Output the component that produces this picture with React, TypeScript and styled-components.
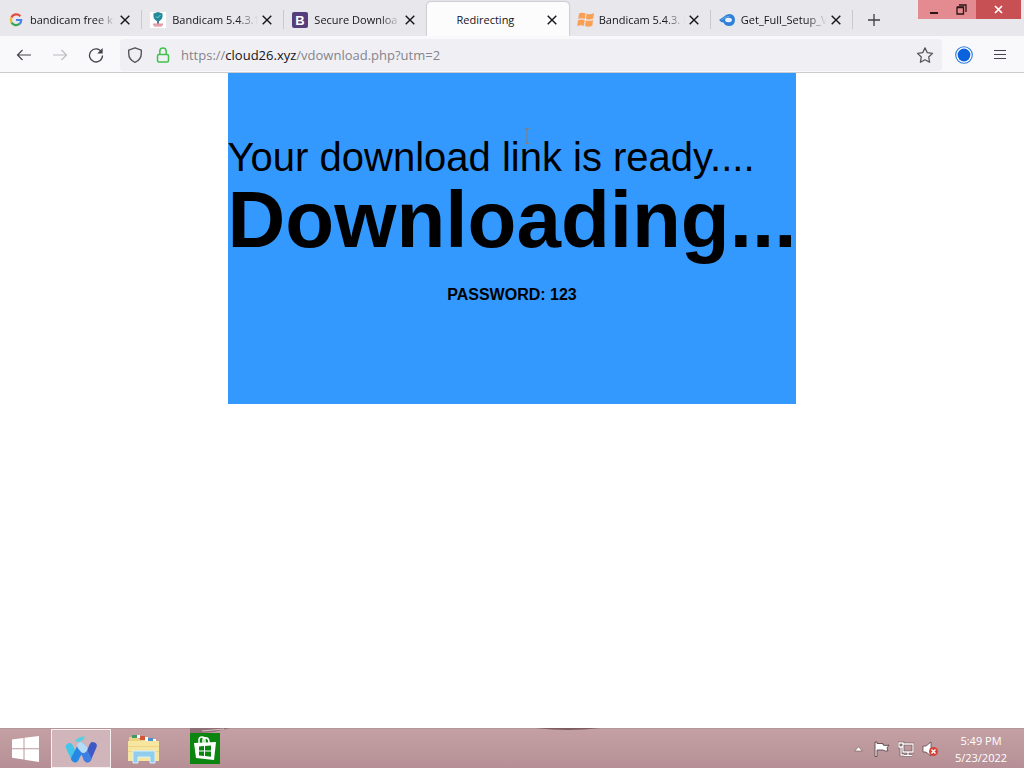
import React from "react";
import styled, { createGlobalStyle } from "styled-components";

const GlobalStyle = createGlobalStyle`
  *, *::before, *::after { box-sizing: border-box; }
  body { margin: 0; background: #fff; }
  button { border: 0; padding: 0; margin: 0; background: none; color: inherit; font: inherit; }
  svg { display: block; flex: none; }
`;

const Screen = styled.div`
  min-height: 100vh;
  display: flex;
  flex-direction: column;
  font-family: "Open Sans", "Noto Sans", sans-serif;
`;

const TabBar = styled.header`
  display: flex;
  height: 36px;
  background: #e8e7ec;
`;

const TabList = styled.nav`
  display: flex;
  flex: 0 1 853px;
  min-width: 0;
`;

const TabItem = styled.div<{ $active?: boolean; $divided?: boolean }>`
  position: relative;
  display: flex;
  align-items: center;
  flex: 1 1 0;
  min-width: 0;
  margin-top: ${(p) => (p.$active ? "2px" : "0")};
  padding: ${(p) => (p.$active ? "2px 8px 0" : "4px 8px 0")};
  border-radius: 4px 4px 0 0;
  background: ${(p) => (p.$active ? "#fcfcfd" : "transparent")};
  box-shadow: ${(p) => (p.$active ? "0 0 2px #8f8f9a" : "none")};
  clip-path: ${(p) => (p.$active ? "inset(-2px -2px 0 -2px)" : "none")};

  &::after {
    content: "";
    display: ${(p) => (p.$divided ? "block" : "none")};
    position: absolute;
    right: 0;
    top: 10px;
    width: 1px;
    height: 19px;
    background: #c9c8ce;
  }
`;

const TabLink = styled.a`
  display: flex;
  align-items: center;
  gap: 6px;
  flex: 1;
  min-width: 0;
  color: #15141a;
  text-decoration: none;
`;

const TabIcon = styled.span`
  width: 16px;
  height: 16px;
  flex: none;
`;

const TabTitle = styled.span<{ $fade?: boolean }>`
  flex: 1;
  min-width: 0;
  overflow: hidden;
  white-space: nowrap;
  font-size: 11px;
  line-height: 18px;
  mask-image: ${(p) => (p.$fade ? "linear-gradient(to right, #000 76%, transparent)" : "none")};
`;

const TabClose = styled.button`
  width: 18px;
  height: 18px;
  display: grid;
  place-items: center;
  color: #15141a;
`;

const NewTab = styled.button`
  width: 36px;
  height: 36px;
  display: grid;
  place-items: center;
  margin-left: 3px;
  padding-top: 4px;
  color: #3f3e46;
`;

const WindowControls = styled.div`
  display: flex;
  height: 19px;
  margin-left: auto;
  margin-right: 3px;
`;

const WindowButton = styled.button<{ $close?: boolean }>`
  width: ${(p) => (p.$close ? "45px" : "29px")};
  display: grid;
  place-items: center;
  background: ${(p) => (p.$close ? "#c75054" : "#e38b90")};
`;

const Toolbar = styled.div`
  display: flex;
  align-items: center;
  height: 37px;
  padding: 1px 6px 0;
  background: #f9f9fb;
  border-bottom: 1px solid #cccccf;
`;

const ToolButton = styled.button<{ $faded?: boolean }>`
  width: 36px;
  height: 32px;
  display: grid;
  place-items: center;
  color: ${(p) => (p.$faded ? "#bcbcc2" : "#45444c")};
`;

const AddressBar = styled.div`
  flex: 1;
  min-width: 0;
  display: flex;
  align-items: center;
  height: 32px;
  margin: 0 4px 0 6px;
  padding: 0 8px 0 7px;
  border-radius: 4px;
  background: #f0f0f4;
  color: #55545c;
`;

const AddressText = styled.a`
  flex: 1;
  min-width: 0;
  margin-left: 10px;
  overflow: hidden;
  white-space: nowrap;
  color: #85848c;
  font-size: 13px;
  line-height: 20px;
  text-decoration: none;

  b { color: #15141a; font-weight: 400; }
`;

const AddressIcons = styled.span`
  display: flex;
  gap: 12px;
`;

const Page = styled.main`
  flex: 1;
  display: flex;
  justify-content: center;
  align-items: flex-start;
  font-family: "Liberation Sans", Arial, sans-serif;
  color: #000;
`;

const Notice = styled.section`
  position: relative;
  padding: 64px 0 100px;
  background: #3399ff;
`;

const Ready = styled.p`
  margin: 0;
  font-size: 40px;
  line-height: 40px;
`;

const Downloading = styled.h1`
  margin: 0;
  font-size: 80px;
  line-height: 85px;
  font-weight: 700;
`;

const Password = styled.p`
  margin: 24px 0 0;
  font-size: 16px;
  line-height: 18px;
  font-weight: 700;
  text-align: center;
`;

const Pointer = styled.svg`
  position: absolute;
  left: 296px;
  top: 55px;
`;

const Taskbar = styled.footer`
  position: relative;
  display: flex;
  height: 40px;
  background: linear-gradient(#c4a0a4, #bb979c 60%, #b58f95);
  border-top: 1px solid #b3969a;
`;

const Reflection = styled.svg<{ $left: number }>`
  position: absolute;
  left: ${(p) => p.$left}px;
  top: -1px;
`;

const TaskButton = styled.button<{ $running?: boolean; $width: number }>`
  position: relative;
  width: ${(p) => p.$width}px;
  display: grid;
  place-items: center;
  border: ${(p) => (p.$running ? "1px solid #f6eff0" : "0")};
  background: ${(p) => (p.$running ? "#d0b6ba" : "transparent")};
`;

const Tray = styled.div`
  display: flex;
  align-items: center;
  margin-left: auto;
`;

const TrayButton = styled.button`
  width: 24px;
  height: 24px;
  display: grid;
  place-items: center;
`;

const Clock = styled.time`
  width: 82px;
  padding-right: 4px;
  color: #fff;
  font-size: 11px;
  line-height: 17px;
  text-align: center;
`;

const CloseGlyph = () => (
  <svg width="10" height="10" viewBox="0 0 10 10" stroke="currentColor" strokeWidth="1.4" fill="none">
    <path d="M.7.7l8.6 8.6M9.3.7L.7 9.3" />
  </svg>
);

const GoogleIcon = () => (
  <svg width="16" height="16" viewBox="0 0 16 16" fill="none" strokeWidth="2.2">
    <path d="M12.300 4.200A5.200 5.200 0 0 0 3.500 5.500" stroke="#e54b40" />
    <path d="M3.500 5.500a5.200 5.200 0 0 0 0 5" stroke="#f3b927" />
    <path d="M3.500 10.500a5.200 5.200 0 0 0 8 1.300" stroke="#38a558" />
    <path d="M11.500 11.800A5 5 0 0 0 13.200 8H8" stroke="#4484ec" />
  </svg>
);

const ShieldSiteIcon = () => (
  <svg width="16" height="16" viewBox="0 0 16 16">
    <path fill="#fff" d="M0 0h16v16H0z" />
    <path fill="#238a9c" d="M8 0l4.500 1.500v3C12.500 7 10.500 8.500 8 9.500 5.500 8.500 3.500 7 3.500 4.500v-3z" />
    <path d="M6 4.500l1.500 1.500L10.500 3" fill="none" stroke="#8cd4d8" />
    <path d="M8 9v3" stroke="#5a7890" strokeWidth="2" />
    <path d="M3 12.500h10" stroke="#e39aa6" strokeWidth="2" />
    <path d="M4 14h8" stroke="#d97f8c" />
  </svg>
);

const SquareBIcon = () => (
  <svg width="16" height="16" viewBox="0 0 16 16">
    <rect width="16" height="16" rx="2" fill="#563d7c" />
    <text x="8" y="12.500" textAnchor="middle" fontFamily="Liberation Sans, sans-serif" fontWeight="700" fontSize="13" fill="#fff">B</text>
  </svg>
);

const OrangeFlagIcon = () => (
  <svg width="18" height="16" viewBox="0 0 18 16" fill="#f8a056">
    <path d="M2 1.500Q5 .2 8.500 1.500L7.900 6.800Q4.500 5.800 1.300 7zM9.500 1.800Q13 3 17 1L16.300 6.600Q12.500 8.200 9 7.100zM1 8.200Q4.500 7 7.700 8L7 13.700Q3.500 12.500.2 14zM8.800 8.400Q12.500 9.500 16 8L15.300 13.700Q11.500 15.500 8 14z" />
  </svg>
);

const SwirlIcon = () => (
  <svg width="16" height="16" viewBox="0 0 16 16">
    <path fill="#2f80d8" d="M0 8L5 4.500Q7 2 10.500 2 16 2.500 16 8.200 15.500 14 10 14 6 14 4.500 10.500 2 10.500 0 8z" />
    <ellipse cx="9.500" cy="8" rx="3.400" ry="2.200" fill="#e9eef8" />
    <path d="M2.500 8.200q3-3.700 8-3.900" stroke="#67aeea" fill="none" />
  </svg>
);

const tabs = [
  { title: "bandicam free k", icon: <GoogleIcon />, divided: true },
  { title: "Bandicam 5.4.3.1", icon: <ShieldSiteIcon />, divided: true },
  { title: "Secure Downloa", icon: <SquareBIcon /> },
  { title: "Redirecting", icon: null, active: true },
  { title: "Bandicam 5.4.3. l", icon: <OrangeFlagIcon />, divided: true },
  { title: "Get_Full_Setup_V", icon: <SwirlIcon /> , divided: true },
];

export default function App() {
  return (
    <Screen>
      <GlobalStyle />
      <TabBar>
        <TabList aria-label="Tabs">
          {tabs.map((t) => (
            <TabItem key={t.title} $active={t.active} $divided={t.divided}>
              <TabLink href="#">
                <TabIcon>{t.icon}</TabIcon>
                <TabTitle $fade={!t.active}>{t.title}</TabTitle>
              </TabLink>
              <TabClose aria-label="Close tab"><CloseGlyph /></TabClose>
            </TabItem>
          ))}
        </TabList>
        <NewTab aria-label="New tab">
          <svg width="12" height="12" viewBox="0 0 12 12" stroke="currentColor" strokeWidth="1.300"><path d="M6 0v12M0 6h12" /></svg>
        </NewTab>
        <WindowControls>
          <WindowButton aria-label="Minimize">
            <svg width="10" height="10" viewBox="0 0 10 10"><path d="M2 7h8v2H2z" fill="#2b1517" /></svg>
          </WindowButton>
          <WindowButton aria-label="Restore">
            <svg width="11" height="11" viewBox="0 0 11 11" fill="none" stroke="#2b1517"><path d="M1 3.500h6.500V10H1zM1 3h7M3 1h7v7" strokeWidth="1.300" /></svg>
          </WindowButton>
          <WindowButton $close aria-label="Close">
            <svg width="9" height="9" viewBox="0 0 9 9" stroke="#fff" strokeWidth="1.700"><path d="M1 1l7 7M8 1L1 8" /></svg>
          </WindowButton>
        </WindowControls>
      </TabBar>

      <Toolbar>
        <ToolButton aria-label="Back">
          <svg width="16" height="16" viewBox="0 0 16 16" fill="none" stroke="currentColor" strokeWidth="1.200"><path d="M15 8H1.500M6.500 3L1.500 8l5 5" /></svg>
        </ToolButton>
        <ToolButton $faded aria-label="Forward">
          <svg width="16" height="16" viewBox="0 0 16 16" fill="none" stroke="currentColor" strokeWidth="1.200"><path d="M1 8h13.500M9.500 3l5 5-5 5" /></svg>
        </ToolButton>
        <ToolButton aria-label="Reload">
          <svg width="16" height="16" viewBox="0 0 16 16" fill="none" stroke="currentColor" strokeWidth="1.300"><path d="M13.500 5A6.500 6.500 0 1 0 14.500 8.500" /><path d="M14.700 1v5.500H9.200z" fill="currentColor" stroke="none" /></svg>
        </ToolButton>
        <AddressBar>
          <AddressIcons>
            <svg width="16" height="16" viewBox="0 0 16 16" fill="none" stroke="currentColor" strokeWidth="1.400" strokeLinejoin="round"><path d="M8 .8l6.300 2.400v3C14.300 10.500 12 13.700 8 15.300 4 13.700 1.700 10.500 1.700 6.200v-3z" /></svg>
            <svg width="16" height="16" viewBox="0 0 16 16" fill="none" stroke="#3fc24c" strokeWidth="1.500"><rect x="2.500" y="7.500" width="11" height="7.500" rx="1.500" /><path d="M4.800 7.500V4.200a3.200 3.200 0 0 1 6.400 0v3.300" /></svg>
          </AddressIcons>
          <AddressText href="#">https://<b>cloud26.xyz</b>/vdownload.php?utm=2</AddressText>
          <svg width="18" height="16" viewBox="0 0 18 16" fill="none" stroke="currentColor" strokeWidth="1.300" strokeLinejoin="round"><path d="M9 .9l2.300 4.800 5.200.7-3.800 3.600.9 5.200L9 12.700l-4.600 2.500.9-5.200L1.500 6.400l5.200-.7z" /></svg>
        </AddressBar>
        <ToolButton aria-label="Account">
          <svg width="18" height="18" viewBox="0 0 18 18"><circle cx="9" cy="9" r="8.300" fill="#fff" stroke="#2b7be0" strokeWidth="1.100" /><circle cx="9" cy="9" r="6.400" fill="#0a62dc" /></svg>
        </ToolButton>
        <ToolButton aria-label="Menu">
          <svg width="12" height="12" viewBox="0 0 12 12" stroke="currentColor"><path d="M0 1.500h12M0 5.500h12M0 9.500h12" /></svg>
        </ToolButton>
      </Toolbar>

      <Page>
        <Notice>
          <Ready>Your download link is ready....</Ready>
          <Downloading>Downloading...</Downloading>
          <Password>PASSWORD: 123</Password>
          <Pointer width="6" height="16" viewBox="0 0 6 16" fill="none" stroke="#97795c"><path d="M1 .5h4M3 .5v15M1 15.500h4" /></Pointer>
        </Notice>
      </Page>

      <Taskbar>
        <Reflection $left={190} width="40" height="6" viewBox="0 0 40 6" aria-hidden="true"><path d="M0 0h40L24 4 0 6z" fill="#8f6f74" /><path d="M12 3l22-2" stroke="#d5c0c3" /></Reflection>
        <Reflection $left={536} width="64" height="3" viewBox="0 0 64 3" aria-hidden="true"><path d="M0 0h64Q32 4 0 0z" fill="#7d5c62" /></Reflection>
        <TaskButton $width={51} aria-label="Start">
          <svg width="28" height="26" viewBox="0 0 28 26" fill="#fff"><path d="M0 3.500l11.500-1.600v10.400H0zM12.500 1.700L27 0v12.300H12.500zM0 13.300h11.500v10.200L0 21.800zM12.500 13.300H27V26l-14.500-2.300z" /></svg>
        </TaskButton>
        <TaskButton $width={60} $running aria-label="Browser">
          <svg width="34" height="30" viewBox="0 0 34 30" fill="none" strokeWidth="7.500" strokeLinecap="round">
            <path d="M5.500 13L11 24.500" stroke="#45c4ea" />
            <path d="M23.500 24.500L29 12" stroke="#4058c4" />
            <path d="M11 24.500L17 13" stroke="#2787e2" />
            <path d="M17.500 12.500L23.500 24.500" stroke="#3f7fe4" />
            <path d="M17 12l2.500 3" stroke="#b5dcf6" />
            <path d="M11 7q3-4.500 10-4.500-2 5-7 5.500z" fill="#55cfe2" />
          </svg>
        </TaskButton>
        <TaskButton $width={65} aria-label="File Explorer">
          <svg width="32" height="30" viewBox="0 0 32 30">
            <path d="M1 3h8l2 2h15l4 3v18H1z" fill="#ecd27a" />
            <path d="M4 1h5v3H4z" fill="#3c9a62" /><path d="M12 2h5v4h-5z" fill="#d4573d" /><path d="M20 4h5v4h-5z" fill="#4a90ca" />
            <path d="M9 1h3v3H9zM17 3h3v4h-3zM25 5h3v3h-3z" fill="#fff" />
            <path d="M0 7h31v20H0z" fill="#f6e6a0" />
            <path d="M0 12.500h31M0 17.500h31" stroke="#edd584" />
            <path d="M5 17h22v12h-5v-6H10v6H5z" fill="#91cdec" stroke="#d8f0fa" />
          </svg>
        </TaskButton>
        <TaskButton $width={58} aria-label="Store">
          <svg width="30" height="31" viewBox="0 0 30 31">
            <path d="M0 0h30v31H0z" fill="#0c8510" />
            <path d="M9 10V7q0-3 3-3t3 3v3M13 10V6q1-2 4-1 2 1 2 5" fill="none" stroke="#fff" strokeWidth="1.500" />
            <path d="M4 10l22-1-2 18-18-2z" fill="#fff" />
            <path d="M9 13.500l5-.5v4.500H9zM15 12.900l6-.5v5h-6zM9 18.500h5V23l-5-.6zM15 18.500h6v5.300l-6-.7z" fill="#0c8510" />
          </svg>
        </TaskButton>
        <Tray>
          <TrayButton aria-label="Show hidden icons">
            <svg width="9" height="6" viewBox="0 0 9 6"><path d="M4.500.7L8.300 5H.7z" fill="#fff" stroke="#705458" strokeWidth=".6" /></svg>
          </TrayButton>
          <TrayButton aria-label="Action Center">
            <svg width="18" height="16" viewBox="0 0 18 16"><path d="M2 1h2v1.500h6V4q3 1 6 0l-2 3 1 3q-3 .5-5-1H4v6.500H2z" fill="#fff" stroke="#5d474b" strokeWidth=".9" /></svg>
          </TrayButton>
          <TrayButton aria-label="Network">
            <svg width="16" height="16" viewBox="0 0 16 16"><path d="M5 3h10v8H5zM10 11v3M6 14.500h8M1 2h4v4H1zM3 6v8h3" stroke="#5d474b" strokeWidth="2.600" fill="none" /><path d="M5 3h10v8H5zM10 11v3M6 14.500h8M1 2h4v4H1zM3 6v8h3" stroke="#fff" strokeWidth="1.300" fill="none" /></svg>
          </TrayButton>
          <TrayButton aria-label="Volume muted">
            <svg width="17" height="16" viewBox="0 0 17 16"><path d="M1 5h3l5-4v14l-5-4H1z" fill="#fff" stroke="#5d474b" strokeWidth=".8" /><circle cx="11.500" cy="10.500" r="4.500" fill="#d64036" /><path d="M9.500 8.500l4 4M13.500 8.500l-4 4" stroke="#fff" strokeWidth="1.400" /></svg>
          </TrayButton>
          <Clock>5:49 PM<br />5/23/2022</Clock>
        </Tray>
      </Taskbar>
    </Screen>
  );
}
